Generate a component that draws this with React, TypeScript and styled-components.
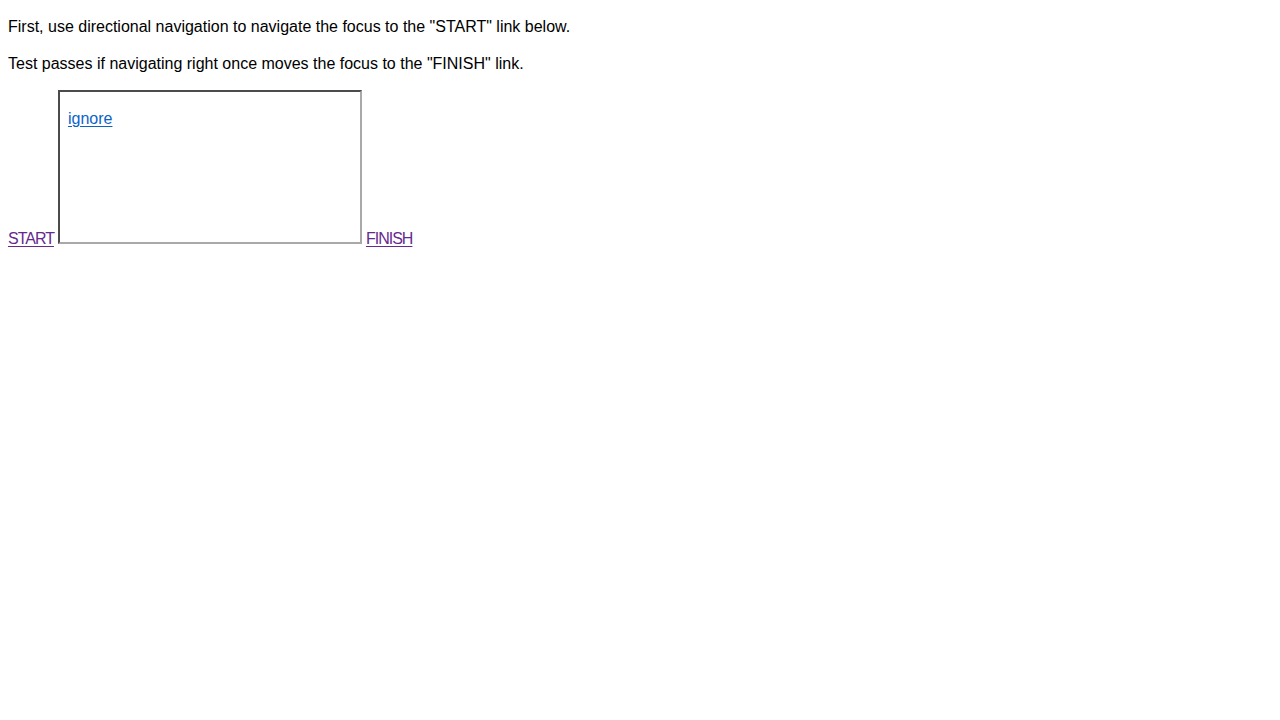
import styled, { createGlobalStyle } from "styled-components";

const GlobalStyle = createGlobalStyle`
  body {
    margin: 0;
    background: #ffffff;
    color: #000000;
    font-family: "Liberation Sans", Arial, sans-serif;
    font-size: 16px;
    line-height: 21px;
  }
`;

const Page = styled.div`
  padding: 8px;
`;

const Para = styled.p`
  margin: 16px 0;

  &:first-child {
    margin-top: 8px;
  }
`;

const Link = styled.a<{ $visited?: boolean }>`
  color: ${(p) => (p.$visited ? "#652a8f" : "#0a64c8")};
  letter-spacing: ${(p) => (p.$visited ? "-1px" : "normal")};
  text-decoration: underline;
  text-underline-offset: 2px;
`;

const Frame = styled.div`
  display: inline-block;
  vertical-align: baseline;
  overflow: hidden;
  width: 300px;
  height: 150px;
  border-width: 2px;
  border-style: solid;
  border-color: #4b4b4b #a9a9a9 #a9a9a9 #4b4b4b;
  margin: 0 4px 0 4px;
`;

const FrameBody = styled.div`
  padding: 8px;
`;

const FramePara = styled.p`
  margin: 8px 0 0;
`;

export default function App() {
  return (
    <Page>
      <GlobalStyle />
      <Para>First, use directional navigation to navigate the focus to the "START" link below.</Para>
      <Para>Test passes if navigating right once moves the focus to the "FINISH" link.</Para>
      <Para>
        <Link $visited href="#start">START</Link>
        <Frame>
          <FrameBody>
            <FramePara>
              <Link href="#ignore">ignore</Link>
            </FramePara>
          </FrameBody>
        </Frame>
        <Link $visited href="#finish">FINISH</Link>
      </Para>
    </Page>
  );
}
